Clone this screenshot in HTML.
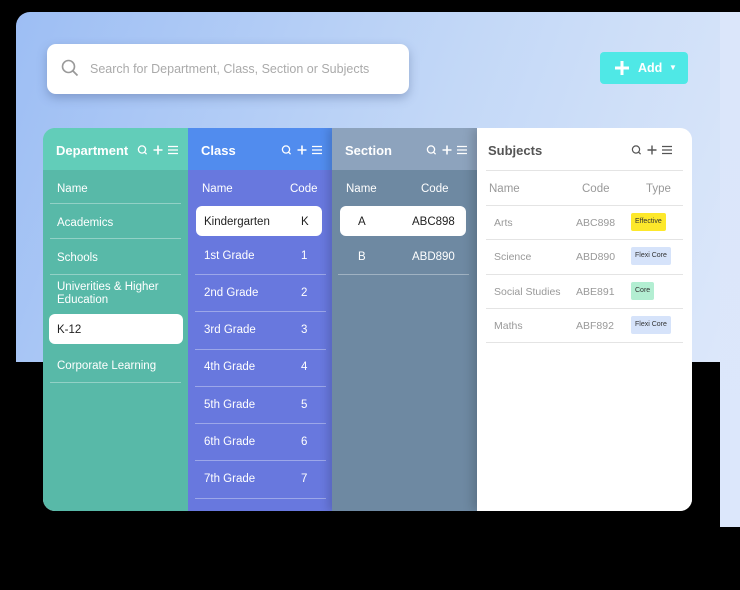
<!DOCTYPE html>
<html><head><meta charset="utf-8"><style>
*{margin:0;padding:0;box-sizing:border-box}
body{width:740px;height:590px;background:#000;position:relative;overflow:hidden;font-family:"Liberation Sans",sans-serif;}
.a{position:absolute}
.bg1{left:16px;top:12px;width:724px;height:350px;border-radius:14px 0 0 0;background:linear-gradient(110deg,#9dbef4 0%,#c3d8f7 55%,#dde8fa 100%)}
.bg2{left:720px;top:12px;width:20px;height:515px;background:linear-gradient(180deg,#dbe6fa,#dce7fb)}
.search{left:47px;top:44px;width:362px;height:50px;background:#fff;border-radius:9px;box-shadow:0 4px 10px rgba(60,80,130,.35)}
.search span{position:absolute;left:43px;top:18px;font-size:12.5px;color:#aaa}
.add{left:600px;top:52px;width:88px;height:32px;background:#4fe8e6;border-radius:4px;color:#fff;font-weight:bold;font-size:12.5px}
.card{left:43px;top:128px;width:649px;height:383px;border-radius:12px;overflow:hidden;background:#fff}
.col{position:absolute;top:0;height:383px}
.hd{position:absolute;left:0;top:0;width:100%;height:42px;color:#fff;font-weight:bold;font-size:13px}
.hd b{position:absolute;left:13px;top:15px}
.ic{position:absolute;right:9px;top:16px}
.t{position:absolute;font-size:11.5px;color:#fff;white-space:nowrap;margin-top:2px}
.ln{position:absolute;height:1px;background:rgba(255,255,255,.35)}
.sel{position:absolute;background:#fff;border-radius:6px}
.g{color:#999}
.gl{position:absolute;height:1px;background:#e4e4e4}
.bd{position:absolute;font-size:7px;color:#333;border-radius:2px;padding:0 4px;height:18px;line-height:18px}
</style></head><body>
<div class="a bg1"></div><div class="a bg2"></div>
<div class="a search">
<svg class="a" style="left:14px;top:15px" width="18" height="18" viewBox="0 0 18 18"><circle cx="7.5" cy="7.5" r="6" fill="none" stroke="#999" stroke-width="1.6"/><path d="M12 12l4.5 4.5" stroke="#999" stroke-width="1.8"/></svg>
<span>Search for Department, Class, Section or Subjects</span></div>
<div class="a add"><svg class="a" style="left:14px;top:8px" width="16" height="16"><path d="M8 1v14M1 8h14" stroke="#fff" stroke-width="3"/></svg><span class="a" style="left:38px;top:9px">Add</span><span class="a" style="left:69px;top:11px;font-size:8px">▼</span></div>

<div class="a card">
<div class="col" style="left:0;width:145px;background:#58b9a8">
<div class="hd" style="background:#62cdb9"><b>Department</b>
<svg class="ic" width="42" height="12" viewBox="0 0 42 12"><circle cx="5" cy="5.5" r="3.6" fill="none" stroke="#fff" stroke-width="1.3"/><path d="M7.6 8.2l2 2" stroke="#fff" stroke-width="1.3"/><path d="M21 1.5v9M16.5 6h9" stroke="#fff" stroke-width="1.6"/><path d="M31 2.5h10M31 6h10M31 9.5h10" stroke="#fff" stroke-width="1.3"/></svg></div>
<div class="t" style="left:14px;top:53px">Name</div>
<div class="ln" style="left:7px;top:75px;width:131px"></div>
<div class="t" style="left:14px;top:87px">Academics</div>
<div class="ln" style="left:7px;top:110px;width:131px"></div>
<div class="t" style="left:14px;top:122px">Schools</div>
<div class="ln" style="left:7px;top:146px;width:131px"></div>
<div class="t" style="left:14px;top:151px;line-height:13px">Univerities &amp; Higher<br>Education</div>
<div class="sel" style="left:6px;top:186px;width:134px;height:30px"></div>
<div class="t" style="left:14px;top:194px;color:#222">K-12</div>
<div class="t" style="left:14px;top:230px">Corporate Learning</div>
<div class="ln" style="left:7px;top:254px;width:131px"></div>
</div>
<div class="col" style="left:145px;width:144px;background:#6878de">
<div class="hd" style="background:#518cee"><b>Class</b>
<svg class="ic" width="42" height="12" viewBox="0 0 42 12"><circle cx="5" cy="5.5" r="3.6" fill="none" stroke="#fff" stroke-width="1.3"/><path d="M7.6 8.2l2 2" stroke="#fff" stroke-width="1.3"/><path d="M21 1.5v9M16.5 6h9" stroke="#fff" stroke-width="1.6"/><path d="M31 2.5h10M31 6h10M31 9.5h10" stroke="#fff" stroke-width="1.3"/></svg></div>
<div class="t" style="left:14px;top:53px">Name</div><div class="t" style="left:102px;top:53px">Code</div>
<div class="sel" style="left:8px;top:78px;width:126px;height:30px"></div>
<div class="t" style="left:16px;top:86px;color:#222">Kindergarten</div><div class="t" style="left:113px;top:86px;color:#222">K</div>
<div class="t" style="left:16px;top:120px">1st Grade</div><div class="t" style="left:113px;top:120px">1</div>
<div class="ln" style="left:7px;top:146px;width:131px"></div>
<div class="t" style="left:16px;top:157px">2nd Grade</div><div class="t" style="left:113px;top:157px">2</div>
<div class="ln" style="left:7px;top:183px;width:131px"></div>
<div class="t" style="left:16px;top:194px">3rd Grade</div><div class="t" style="left:113px;top:194px">3</div>
<div class="ln" style="left:7px;top:221px;width:131px"></div>
<div class="t" style="left:16px;top:231px">4th Grade</div><div class="t" style="left:113px;top:231px">4</div>
<div class="ln" style="left:7px;top:258px;width:131px"></div>
<div class="t" style="left:16px;top:269px">5th Grade</div><div class="t" style="left:113px;top:269px">5</div>
<div class="ln" style="left:7px;top:295px;width:131px"></div>
<div class="t" style="left:16px;top:306px">6th Grade</div><div class="t" style="left:113px;top:306px">6</div>
<div class="ln" style="left:7px;top:332px;width:131px"></div>
<div class="t" style="left:16px;top:343px">7th Grade</div><div class="t" style="left:113px;top:343px">7</div>
<div class="ln" style="left:7px;top:370px;width:131px"></div>
</div>
<div class="col" style="left:289px;width:145px;background:#6e89a2;box-shadow:-4px 0 8px rgba(0,0,0,.15)">
<div class="hd" style="background:#8da3bd"><b>Section</b>
<svg class="ic" width="42" height="12" viewBox="0 0 42 12"><circle cx="5" cy="5.5" r="3.6" fill="none" stroke="#fff" stroke-width="1.3"/><path d="M7.6 8.2l2 2" stroke="#fff" stroke-width="1.3"/><path d="M21 1.5v9M16.5 6h9" stroke="#fff" stroke-width="1.6"/><path d="M31 2.5h10M31 6h10M31 9.5h10" stroke="#fff" stroke-width="1.3"/></svg></div>
<div class="t" style="left:14px;top:53px">Name</div><div class="t" style="left:89px;top:53px">Code</div>
<div class="sel" style="left:8px;top:78px;width:126px;height:30px"></div>
<div class="t" style="left:26px;top:86px;color:#222">A</div><div class="t" style="left:80px;top:86px;color:#222">ABC898</div>
<div class="t" style="left:26px;top:121px">B</div><div class="t" style="left:80px;top:121px">ABD890</div>
<div class="ln" style="left:6px;top:146px;width:131px"></div>
</div>
<div class="col" style="left:434px;width:215px;background:#fff;box-shadow:-4px 0 10px rgba(0,0,0,.18)">
<div class="hd" style="color:#555"><b style="left:11px">Subjects</b>
<svg class="ic" style="right:19px" width="42" height="12" viewBox="0 0 42 12"><circle cx="5" cy="5.5" r="3.6" fill="none" stroke="#555" stroke-width="1.2"/><path d="M7.6 8.2l2 2" stroke="#555" stroke-width="1.2"/><path d="M21 1.5v9M16.5 6h9" stroke="#555" stroke-width="1.4"/><path d="M31 2.5h10M31 6h10M31 9.5h10" stroke="#555" stroke-width="1.2"/></svg></div>
<div class="gl" style="left:9px;top:42px;width:197px"></div>
<div class="t g" style="left:12px;top:53px">Name</div><div class="t g" style="left:105px;top:53px">Code</div><div class="t g" style="left:169px;top:53px">Type</div>
<div class="gl" style="left:9px;top:77px;width:197px"></div>
<div class="t g" style="left:17px;top:87px;font-size:10.5px">Arts</div><div class="t g" style="left:99px;top:87px;font-size:10.5px">ABC898</div>
<div class="bd" style="left:154px;top:85px;background:#fde82b">Effective</div>
<div class="gl" style="left:9px;top:111px;width:197px"></div>
<div class="t g" style="left:17px;top:121px;font-size:10.5px">Science</div><div class="t g" style="left:99px;top:121px;font-size:10.5px">ABD890</div>
<div class="bd" style="left:154px;top:119px;background:#d6e3fa">Flexi Core</div>
<div class="gl" style="left:9px;top:146px;width:197px"></div>
<div class="t g" style="left:17px;top:156px;font-size:10.5px">Social Studies</div><div class="t g" style="left:99px;top:156px;font-size:10.5px">ABE891</div>
<div class="bd" style="left:154px;top:154px;background:#b3eed2">Core</div>
<div class="gl" style="left:9px;top:180px;width:197px"></div>
<div class="t g" style="left:17px;top:190px;font-size:10.5px">Maths</div><div class="t g" style="left:99px;top:190px;font-size:10.5px">ABF892</div>
<div class="bd" style="left:154px;top:188px;background:#d6e3fa">Flexi Core</div>
<div class="gl" style="left:9px;top:214px;width:197px"></div>
</div>
</div>
</body></html>
